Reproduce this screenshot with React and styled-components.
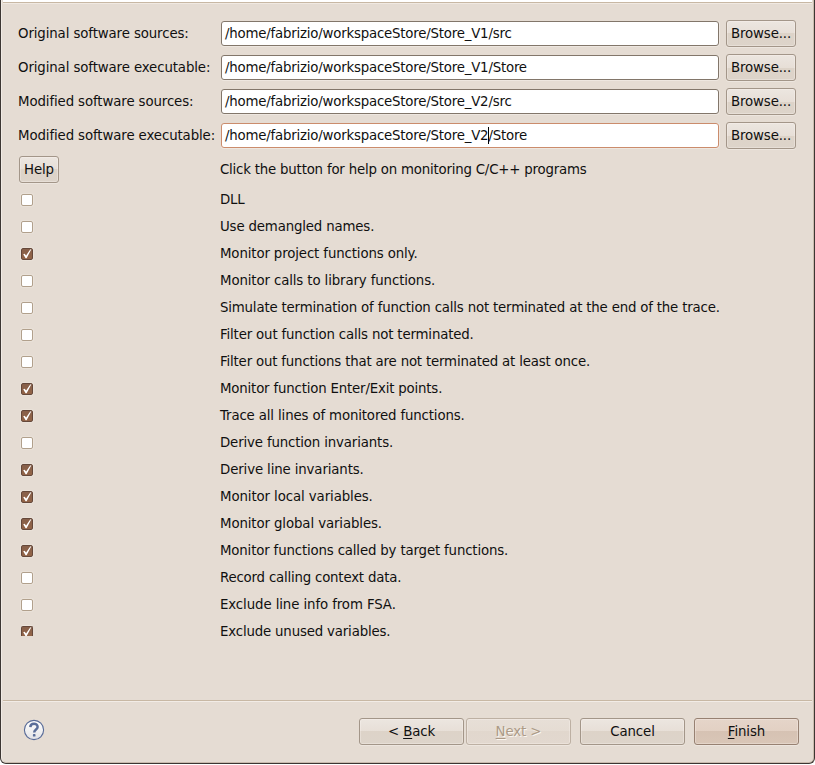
import React from "react";
import styled, { createGlobalStyle } from "styled-components";

const GlobalStyle = createGlobalStyle`
  * { box-sizing: border-box; }
  body { margin: 0; background: #fff; overflow: hidden; }
`;

const Dialog = styled.div`
  width: 815px;
  height: 764px;
  display: flex;
  flex-direction: column;
  background: #e5dcd3;
  border: 1px solid #3c3632;
  border-top: 0;
  border-radius: 0 0 6px 6px;
  box-shadow: inset 1px 0 #f1ebe5, inset -1px 0 #c9bbad, inset 0 -1px #c9bbad;
  color: #101010;
  font: 13.333px/16px "DejaVu Sans", sans-serif;
  white-space: nowrap;
`;

const Header = styled.div`
  height: 4px;
  margin: 0 2px;
  background: #fff;
  border-bottom: 1px solid #f0e9e2;
  box-shadow: inset 0 -1px #c8b8a4;
`;

const Form = styled.main`
  height: 632px;
  padding: 12px 0 0 17px;
`;

const FieldRow = styled.div`
  display: grid;
  grid-template-columns: 203px 498px 77px;
  align-items: center;
  height: 34px;
  padding-top: 1px;

  & > :last-child { margin-left: 7px; }
`;

const Label = styled.label`
  letter-spacing: -0.11px;
`;

const Field = styled.div`
  display: flex;
  align-items: center;
  height: 25px;
  padding: 0 0 0 3px;
  letter-spacing: -0.205px;
  background: #fff;
  border: 1px solid ${(p) => (p.$focused ? "#cb8c6c" : "#82766a")};
  border-radius: 3px;
  box-shadow: 0 1px #eee7e0, 1px 0 #eee7e0;
`;

const Caret = styled.span`
  width: 1px;
  height: 17px;
  margin-right: -1px;
  background: #000;
`;

const tones = {
  normal: ["#ece6e0", "#e7dfd7", "#ddd3c8", "#ddd4ca", "#a39689"],
  primary: ["#e5d5c9", "#e2d0c3", "#d6c2b3", "#d9c6b7", "#978172"],
  disabled: ["#e7dfd7", "#e5dcd3", "#e1d7cd", "#e2d8cf", "#bdb0a3"],
};

const Button = styled.button`
  width: ${(p) => p.$width}px;
  height: 27px;
  flex: none;
  padding: 0;
  font: inherit;
  letter-spacing: -0.11px;
  color: ${(p) => (p.$tone === "disabled" ? "#ac9a86" : "#101010")};
  text-shadow: ${(p) => (p.$tone === "disabled" ? "1px 1px #faf6f1" : "none")};
  border: 1px solid ${(p) => tones[p.$tone || "normal"][4]};
  border-radius: 3px;
  background: ${(p) => {
    const t = tones[p.$tone || "normal"];
    return `linear-gradient(${t[0]}, ${t[1]} 50%, ${t[2]} 50%, ${t[3]})`;
  }};
  box-shadow: inset 0 0 0 1px rgba(255, 250, 245, 0.3), 0 1px #ede6df;
`;

const HelpRow = styled.div`
  display: flex;
  align-items: center;
  height: 34px;
  padding: 1px 0 0 1px;
`;

const HelpText = styled.span`
  margin-left: 161px;
  letter-spacing: -0.2px;
`;

const OptionRow = styled.div`
  display: grid;
  grid-template-columns: 199px 1fr;
  height: 27px;
  padding: 6px 0 0 3px;
`;

const OptionText = styled.span`
  letter-spacing: ${(p) => p.$spacing}px;
`;

const Box = styled.span`
  width: 12px;
  height: ${(p) => (p.$cut ? 10 : 12)}px;
  margin-top: 2px;
  overflow: hidden;
  border: 1px solid ${(p) => (p.$checked ? "#65483a" : "#b1a08c")};
  border-bottom-width: ${(p) => (p.$cut ? 0 : 1)}px;
  border-radius: ${(p) => (p.$cut ? "2px 2px 0 0" : "2px")};
  background: ${(p) => (p.$checked ? "linear-gradient(#87604a, #936447)" : "#fff")};
  box-shadow: ${(p) => (p.$cut ? "0 -1px #eee6de" : "0 0 0 1px #eae2d9")};

  svg { display: block; }
`;

const Footer = styled.footer`
  display: flex;
  align-items: center;
  height: 63px;
  margin: 64px 2px 0;
  padding: 0 13px 0 20px;
  border-top: 1px solid #c8b8a4;
  box-shadow: inset 0 1px #f2ece6;
`;

const HelpIcon = styled.svg`
  width: 22px;
  height: 22px;
  margin: 0 auto 4px 0;
`;

const Actions = styled.div`
  display: flex;
  margin-bottom: 1px;
  gap: 9px;
`;

const Pair = styled.div`
  display: flex;
  gap: 2px;
`;

const Key = styled.span`
  text-decoration: underline;
  text-decoration-thickness: 1px;
  text-underline-offset: 2px;
`;

const fields = [
  ["Original software sources:", "/home/fabrizio/workspaceStore/Store_V1/src"],
  ["Original software executable:", "/home/fabrizio/workspaceStore/Store_V1/Store"],
  ["Modified software sources:", "/home/fabrizio/workspaceStore/Store_V2/src"],
  ["Modified software executable:", "/home/fabrizio/workspaceStore/Store_V2", "/Store"],
];

const options = [
  ["DLL", false, -0.2],
  ["Use demangled names.", false, -0.16],
  ["Monitor project functions only.", true, -0.13],
  ["Monitor calls to library functions.", false, -0.12],
  ["Simulate termination of function calls not terminated at the end of the trace.", false, -0.18],
  ["Filter out function calls not terminated.", false, -0.16],
  ["Filter out functions that are not terminated at least once.", false, -0.18],
  ["Monitor function Enter/Exit points.", true, -0.18],
  ["Trace all lines of monitored functions.", true, -0.14],
  ["Derive function invariants.", false, -0.15],
  ["Derive line invariants.", true, -0.13],
  ["Monitor local variables.", true, -0.1],
  ["Monitor global variables.", true, -0.11],
  ["Monitor functions called by target functions.", true, -0.16],
  ["Record calling context data.", false, -0.2],
  ["Exclude line info from FSA.", false, -0.1],
  ["Exclude unused variables.", true, -0.17],
];

const Check = ({ checked, cut }) => (
  <Box $checked={checked} $cut={cut}>
    {checked && (
      <svg width="10" height="10" viewBox="0 0 10 10">
        <path d="M1.2 5.2 2.6 4.8 4.1 6.6 8.2 .6 9.4 .2 4.6 9.2 3.6 9.2Z" fill="#fff" />
      </svg>
    )}
  </Box>
);

export default function App() {
  return (
    <>
      <GlobalStyle />
      <Dialog>
        <Header />
        <Form>
          {fields.map(([label, value, rest]) => (
            <FieldRow key={label}>
              <Label>{label}</Label>
              <Field $focused={!!rest}>
                <span>{value}</span>
                {rest && <Caret />}
                {rest && <span>{rest}</span>}
              </Field>
              <Button $width={70}>Browse...</Button>
            </FieldRow>
          ))}
          <HelpRow>
            <Button $width={40}>Help</Button>
            <HelpText>Click the button for help on monitoring C/C++ programs</HelpText>
          </HelpRow>
          {options.map(([text, checked, spacing], i) => (
            <OptionRow key={text}>
              <Check checked={checked} cut={i === options.length - 1} />
              <OptionText $spacing={spacing}>{text}</OptionText>
            </OptionRow>
          ))}
        </Form>
        <Footer>
          <HelpIcon viewBox="0 0 22 22">
            <defs>
              <linearGradient id="helpFill" x1="0" y1="0" x2="0" y2="1">
                <stop offset="0" stopColor="#fff" />
                <stop offset="1" stopColor="#e3e3e6" />
              </linearGradient>
            </defs>
            <circle cx="11" cy="11" r="9.6" fill="url(#helpFill)" stroke="#586b98" strokeWidth="1.1" />
            <path d="M7.3 8.1C7.5 3.7 14.6 3.8 14.6 7.9C14.6 10.6 11.2 10.4 11.2 13.5" fill="none" stroke="#5b6e99" strokeWidth="2.5" />
            <rect x="9.9" y="15" width="2.6" height="2.6" rx=".7" fill="#5b6e99" />
          </HelpIcon>
          <Actions>
            <Pair>
              <Button $width={105}>&lt; <Key>B</Key>ack</Button>
              <Button $width={105} $tone="disabled"><Key>N</Key>ext &gt;</Button>
            </Pair>
            <Button $width={105}>Cancel</Button>
            <Button $width={105} $tone="primary"><Key>F</Key>inish</Button>
          </Actions>
        </Footer>
      </Dialog>
    </>
  );
}
